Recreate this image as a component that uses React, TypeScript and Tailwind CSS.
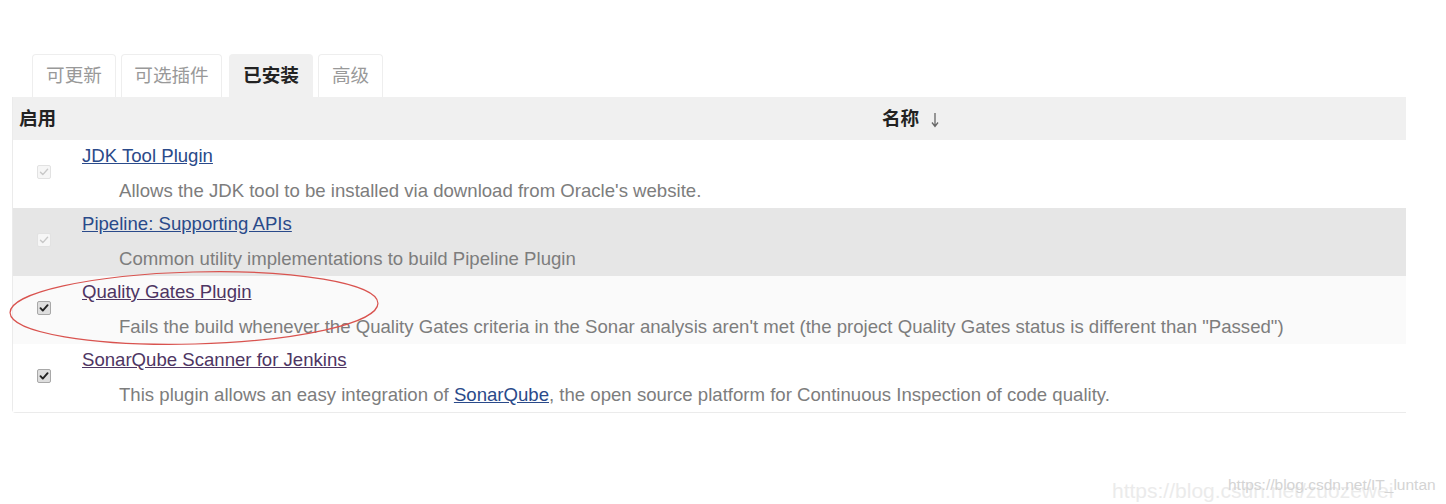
import React from "react";

const font = { fontFamily: '"Liberation Sans", Arial, "Noto Sans CJK SC", sans-serif' };

function Check({ disabled }: { disabled?: boolean }) {
  return (
    <span
      className={
        "flex h-[14px] w-[14px] items-center justify-center rounded-[2px] border " +
        (disabled ? "border-[#e2e2e2] bg-[#f6f6f6]" : "border-[#a8a8a8] bg-[#dedede]")
      }
    >
      <svg width="10" height="10" viewBox="0 0 10 10">
        <path
          d="M1.5 5.2 L3.8 7.6 L8.6 2.2"
          fill="none"
          stroke={disabled ? "#c8c8c8" : "#222"}
          strokeWidth={disabled ? 1.4 : 1.9}
          strokeLinecap="round"
          strokeLinejoin="round"
        />
      </svg>
    </span>
  );
}

type Row = {
  name: string;
  visited?: boolean;
  disabled?: boolean;
  bg: string;
  desc: React.ReactNode;
};

const rows: Row[] = [
  {
    name: "JDK Tool Plugin",
    disabled: true,
    bg: "bg-white",
    desc: "Allows the JDK tool to be installed via download from Oracle's website.",
  },
  {
    name: "Pipeline: Supporting APIs",
    disabled: true,
    bg: "bg-[#e6e6e6]",
    desc: "Common utility implementations to build Pipeline Plugin",
  },
  {
    name: "Quality Gates Plugin",
    visited: true,
    bg: "bg-[#fafafa]",
    desc: 'Fails the build whenever the Quality Gates criteria in the Sonar analysis aren\'t met (the project Quality Gates status is different than "Passed")',
  },
  {
    name: "SonarQube Scanner for Jenkins",
    visited: true,
    bg: "bg-white",
    desc: (
      <>
        This plugin allows an easy integration of{" "}
        <a className="text-[#2a4a8a] underline">SonarQube</a>, the open source platform for Continuous
        Inspection of code quality.
      </>
    ),
  },
];

export default function App() {
  return (
    <div className="relative h-[504px] w-[1446px] overflow-hidden bg-white" style={font}>
      <div className="pl-[12px] pt-[54px]">
        <div className="ml-[20px] flex gap-[5px]">
          <div className="flex h-[43px] w-[84px] items-center justify-center rounded-t-[4px] border border-b-0 border-[#eeeeee] text-[18.6px] text-[#999]">
            可更新
          </div>
          <div className="flex h-[43px] w-[101px] items-center justify-center rounded-t-[4px] border border-b-0 border-[#eeeeee] text-[18.6px] text-[#999]">
            可选插件
          </div>
          <div className="ml-[2px] flex h-[43px] w-[84px] items-center justify-center rounded-t-[4px] bg-[#f0f0f0] text-[18.6px] font-bold text-[#222]">
            已安装
          </div>
          <div className="flex h-[43px] w-[65px] items-center justify-center rounded-t-[4px] border border-b-0 border-[#eeeeee] text-[18.6px] text-[#999]">
            高级
          </div>
        </div>
        <div className="w-[1394px] rounded-bl-[4px] border-b border-l border-[#ebebeb]">
          <div className="flex h-[43px] items-center bg-[#f0f0f0] text-[18.6px] font-bold text-[#222]">
            <div className="w-[64px] pl-[6px]">启用</div>
            <div className="flex items-center pl-[805px]">
              <span>名称</span>
              <svg className="ml-[12px] mt-[4px]" width="8" height="16" viewBox="0 0 8 16">
                <path d="M4 1 V14 M1 10.5 L4 14.5 L7 10.5" fill="none" stroke="#666" strokeWidth="1.3" />
              </svg>
            </div>
          </div>
          {rows.map((r) => (
            <div key={r.name} className={"flex h-[68px] " + r.bg}>
              <div className="flex w-[64px] justify-center pt-[25px] pr-[2px]">
                <Check disabled={r.disabled} />
              </div>
              <div className="pl-[5px] pt-[6px]">
                <div className="leading-[20px]">
                  <a
                    className={
                      "text-[18.6px] underline " + (r.visited ? "text-[#4e3563]" : "text-[#2a4a8a]")
                    }
                  >
                    {r.name}
                  </a>
                </div>
                <div className="mt-[14px] pl-[37px] text-[18.6px] leading-[20px] text-[#7d7d7d]">
                  {r.desc}
                </div>
              </div>
            </div>
          ))}
        </div>
      </div>

      <svg className="pointer-events-none absolute left-0 top-0" width="1446" height="504">
        <ellipse
          cx="194"
          cy="308"
          rx="184"
          ry="36"
          fill="none"
          stroke="#d9534f"
          strokeWidth="1.2"
          transform="rotate(-1.5 194 308)"
        />
      </svg>

      <div className="pointer-events-none absolute left-[1112px] top-[478px] text-[21px] leading-[26px] text-[#ebebeb]">
        https://blog.csdn.net/zuozewei
      </div>
      <div className="pointer-events-none absolute left-[1228px] top-[476px] text-[15.5px] leading-[18px] text-[#d4d4d4]">
        https://blog.csdn.net/IT_luntan
      </div>
    </div>
  );
}
